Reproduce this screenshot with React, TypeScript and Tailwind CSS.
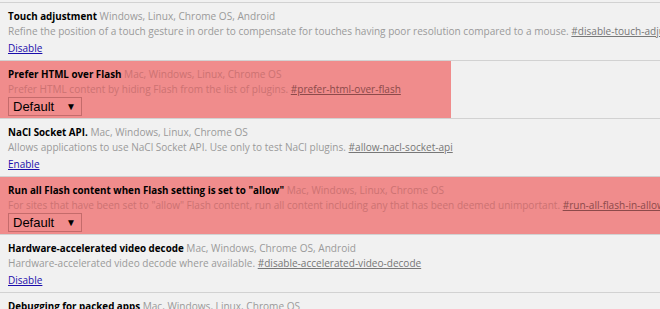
import React from 'react';

interface Flag {
  title: string;
  platforms: string;
  description: string;
  hash: string;
  action?: string;
  select?: boolean;
  highlight?: 'partial' | 'full';
}

const flags: Flag[] = [
  {
    title: 'Touch adjustment',
    platforms: 'Windows, Linux, Chrome OS, Android',
    description: 'Refine the position of a touch gesture in order to compensate for touches having poor resolution compared to a mouse.',
    hash: '#disable-touch-adjustment',
    action: 'Disable'
  },
  {
    title: 'Prefer HTML over Flash',
    platforms: 'Mac, Windows, Linux, Chrome OS',
    description: 'Prefer HTML content by hiding Flash from the list of plugins.',
    hash: '#prefer-html-over-flash',
    select: true,
    highlight: 'partial'
  },
  {
    title: 'NaCl Socket API.',
    platforms: 'Mac, Windows, Linux, Chrome OS',
    description: 'Allows applications to use NaCl Socket API. Use only to test NaCl plugins.',
    hash: '#allow-nacl-socket-api',
    action: 'Enable'
  },
  {
    title: 'Run all Flash content when Flash setting is set to "allow"',
    platforms: 'Mac, Windows, Linux, Chrome OS',
    description: 'For sites that have been set to "allow" Flash content, run all content including any that has been deemed unimportant.',
    hash: '#run-all-flash-in-allow-mode',
    select: true,
    highlight: 'full'
  },
  {
    title: 'Hardware-accelerated video decode',
    platforms: 'Mac, Windows, Chrome OS, Android',
    description: 'Hardware-accelerated video decode where available.',
    hash: '#disable-accelerated-video-decode',
    action: 'Disable'
  },
  {
    title: 'Debugging for packed apps',
    platforms: 'Mac, Windows, Linux, Chrome OS',
    description: 'Enables debugging context menu options such as Inspect Element for packed applications.',
    hash: '#debug-packed-apps',
    action: 'Enable'
  }
];

const FlagRow = ({ flag }: { flag: Flag }) => {
  const red = !!flag.highlight;
  return (
    <div className="border-t border-[#d2d2d2]">
      <div
        className={`h-[57px] overflow-hidden pl-[8px] pt-[6px] whitespace-nowrap ${
          flag.highlight === 'partial' ? 'w-[451px] bg-[#f08c8c]' : flag.highlight === 'full' ? 'bg-[#f08c8c]' : ''
        }`}
      >
        <div className="text-[10.1px] leading-[15px]">
          <span className="text-[9.8px] font-bold text-black">{flag.title}</span>{' '}
          <span className={red ? 'text-[#cc7272]' : 'text-[#9a9a9a]'}>{flag.platforms}</span>
        </div>
        <div className={`text-[10.05px] leading-[15px] ${red ? 'text-[#cc7272]' : 'text-[#9a9a9a]'}`}>
          {flag.description}{' '}
          <a href="#" className={`underline ${red ? 'text-[#8c4a4a]' : 'text-[#777]'}`}>
            {flag.hash}
          </a>
        </div>
        {flag.select ? (
          <div
            className="flex h-[19px] w-[74px] items-center justify-between border border-[#c46b6b] pl-[4px] pr-[5px] text-[13px] text-black"
            style={{ fontFamily: '"Liberation Sans", Arial, sans-serif' }}
          >
            <span>Default</span>
            <span className="text-[10px]">▼</span>
          </div>
        ) : (
          <a href="#" className="mt-[2px] block w-fit text-[10px] leading-[15px] text-[#1a0dab] underline">
            {flag.action}
          </a>
        )}
      </div>
    </div>
  );
};

export default function App() {
  return (
    <div
      className="h-[309px] w-[660px] overflow-hidden bg-[#f1f1f1] pt-[2px]"
      style={{ fontFamily: '"Open Sans", "Noto Sans", sans-serif' }}
    >
      {flags.map((flag) => (
        <FlagRow key={flag.hash} flag={flag} />
      ))}
    </div>
  );
}
